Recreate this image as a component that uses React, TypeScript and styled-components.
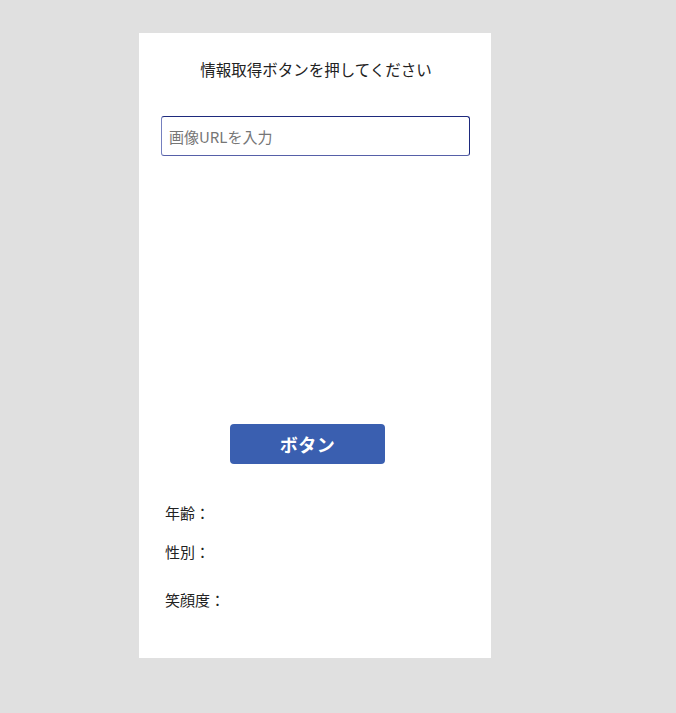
import React from "react";
import styled, { createGlobalStyle } from "styled-components";

const Global = createGlobalStyle`
  html, body { margin: 0; padding: 0; background: #e0e0e0; }
  body { font-family: "Noto Sans CJK JP", "Noto Sans", sans-serif; }
`;

const Page = styled.div`
  width: 676px;
  height: 713px;
  padding: 33px 0 0 139px;
  box-sizing: border-box;
`;

const Card = styled.div`
  width: 352px;
  height: 625px;
  background: #ffffff;
  display: flex;
  flex-direction: column;
  box-sizing: border-box;
`;

const Title = styled.div`
  margin-top: 26px;
  text-align: center;
  font-size: 15.5px;
  line-height: 21px;
  color: #222;
  padding-left: 2px;
`;

const UrlInput = styled.input`
  margin: 36px 0 0 22px;
  width: 309px;
  height: 40px;
  box-sizing: border-box;
  border: 1px solid #1e2a7d;
  border-left-color: #7580bf;
  border-bottom-color: #5660a8;
  border-radius: 3px;
  padding: 0 7px;
  font-family: "Noto Sans CJK JP", "Noto Sans", sans-serif;
  font-size: 15px;
  color: #333;
  outline: none;
  &::placeholder { color: #767676; }
`;

const ActionButton = styled.button`
  margin: 268px 0 0 91px;
  width: 155px;
  height: 40px;
  border: none;
  border-radius: 4px;
  background: #3a5fb0;
  color: #fff;
  font-family: "Noto Sans CJK JP", "Noto Sans", sans-serif;
  font-weight: 700;
  font-size: 18px;
  letter-spacing: 0.5px;
  cursor: pointer;
`;

const Results = styled.div`
  margin: 39px 0 0 26px;
  display: flex;
  flex-direction: column;
`;

const Label = styled.div<{ $gap: number }>`
  margin-top: ${(p) => p.$gap}px;
  font-size: 15px;
  line-height: 20px;
  color: #222;
`;

export default function App() {
  return (
    <>
      <Global />
      <Page>
        <Card>
          <Title>情報取得ボタンを押してください</Title>
          <UrlInput placeholder="画像URLを入力" />
          <ActionButton>ボタン</ActionButton>
          <Results>
            <Label $gap={0}>年齢：</Label>
            <Label $gap={19}>性別：</Label>
            <Label $gap={28}>笑顔度：</Label>
          </Results>
        </Card>
      </Page>
    </>
  );
}
